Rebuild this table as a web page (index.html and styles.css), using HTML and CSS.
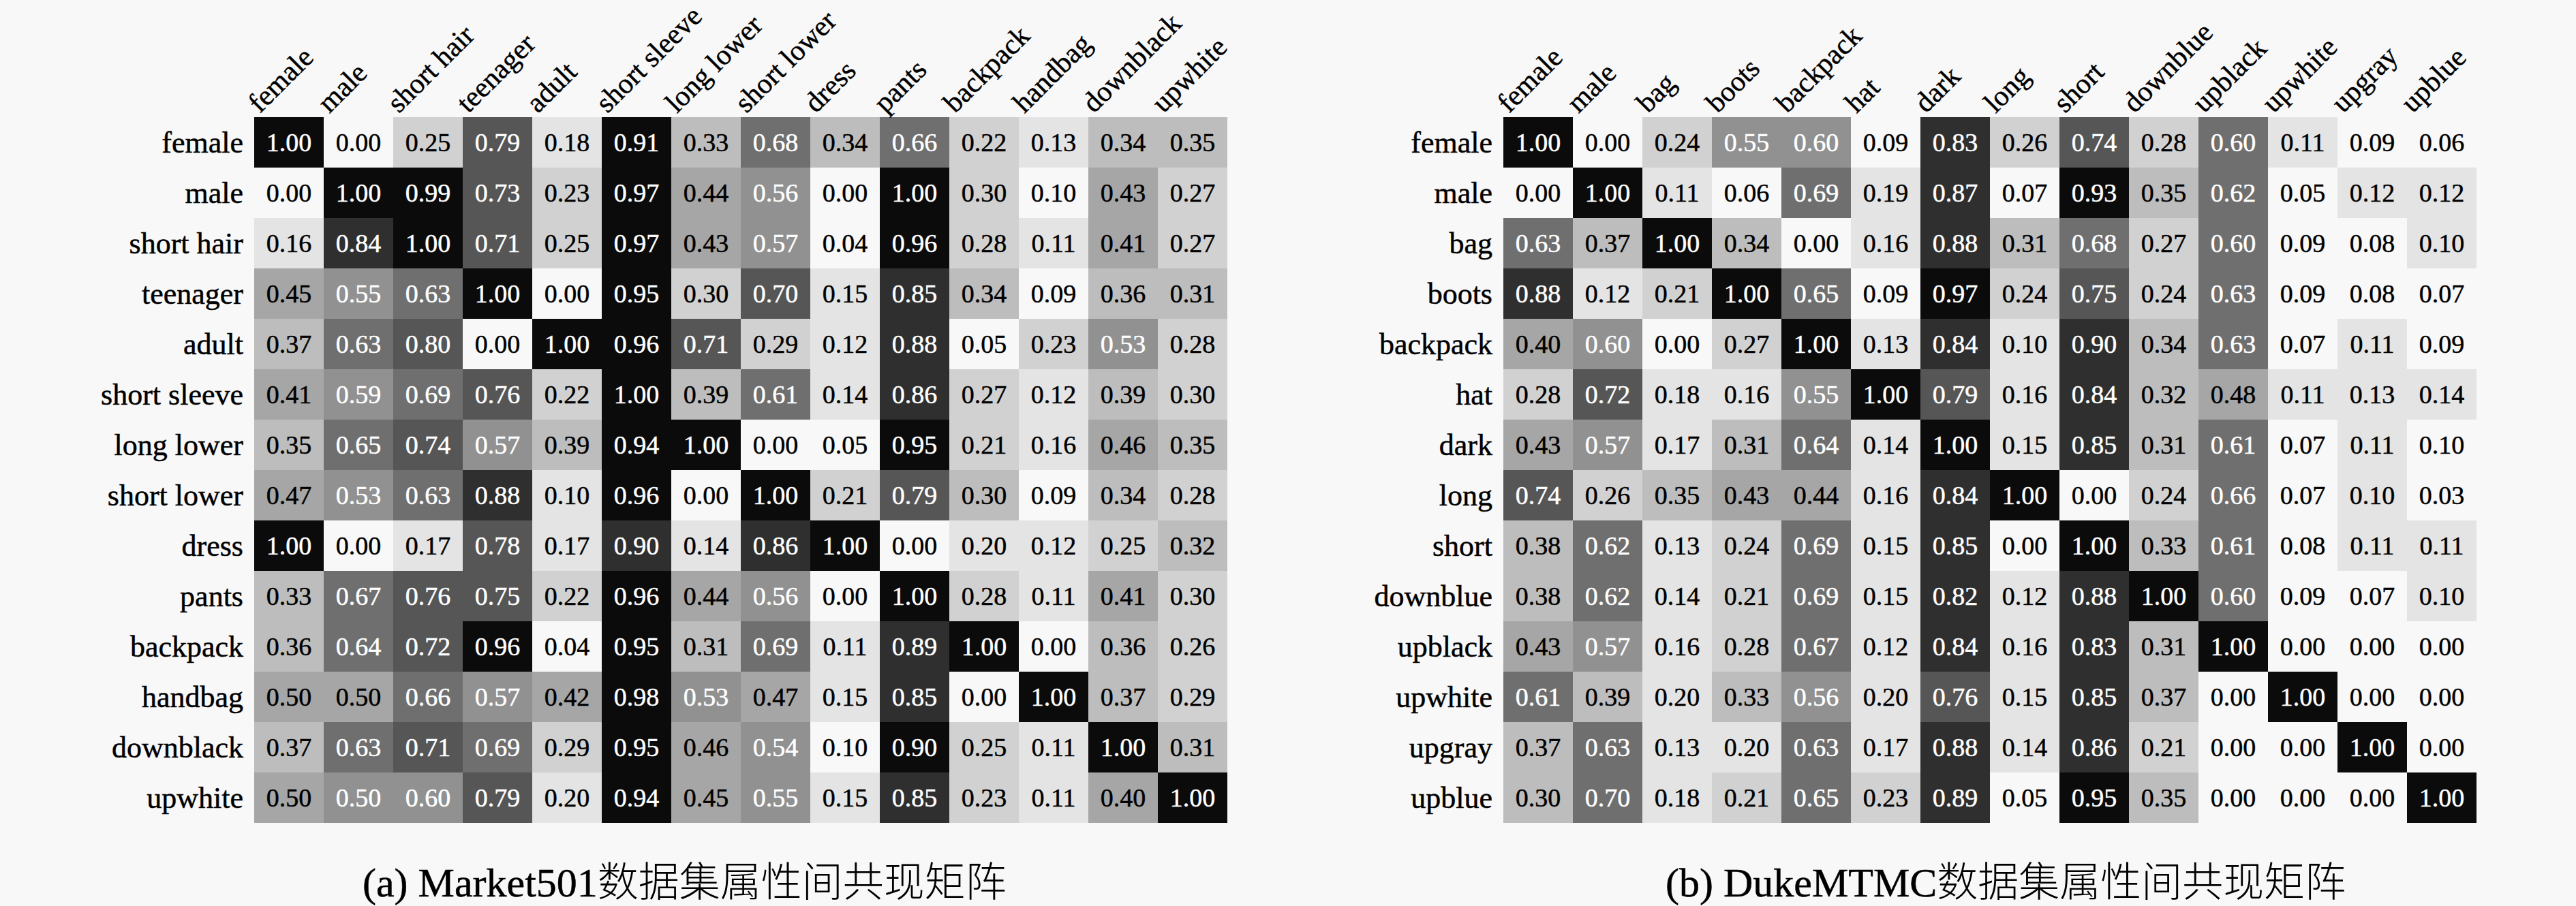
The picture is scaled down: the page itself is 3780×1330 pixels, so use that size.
FILE: index.html
```html
<!DOCTYPE html>
<html lang="zh-CN">
<head>
<meta charset="utf-8">
<title>属性间共现矩阵</title>
<link rel="stylesheet" href="styles.css">
</head>
<body>
<main class="page">
  <figure class="panel">
    <div class="matrix">
      <div class="corner"></div>
      <div class="ch"><span>female</span></div>
      <div class="ch"><span>male</span></div>
      <div class="ch"><span>short hair</span></div>
      <div class="ch"><span>teenager</span></div>
      <div class="ch"><span>adult</span></div>
      <div class="ch"><span>short sleeve</span></div>
      <div class="ch"><span>long lower</span></div>
      <div class="ch"><span>short lower</span></div>
      <div class="ch"><span>dress</span></div>
      <div class="ch"><span>pants</span></div>
      <div class="ch"><span>backpack</span></div>
      <div class="ch"><span>handbag</span></div>
      <div class="ch"><span>downblack</span></div>
      <div class="ch"><span>upwhite</span></div>

      <div class="rl">female</div>
      <div class="c b9">1.00</div><div class="c b0">0.00</div><div class="c b2">0.25</div><div class="c b7">0.79</div><div class="c b1">0.18</div><div class="c b9">0.91</div><div class="c b3">0.33</div><div class="c b6">0.68</div><div class="c b3">0.34</div><div class="c b6">0.66</div><div class="c b2">0.22</div><div class="c b1">0.13</div><div class="c b3">0.34</div><div class="c b3">0.35</div>

      <div class="rl">male</div>
      <div class="c b0">0.00</div><div class="c b9">1.00</div><div class="c b9">0.99</div><div class="c b7">0.73</div><div class="c b2">0.23</div><div class="c b9">0.97</div><div class="c b4">0.44</div><div class="c b5">0.56</div><div class="c b0">0.00</div><div class="c b9">1.00</div><div class="c b2">0.30</div><div class="c b0">0.10</div><div class="c b4">0.43</div><div class="c b2">0.27</div>

      <div class="rl">short hair</div>
      <div class="c b1">0.16</div><div class="c b8">0.84</div><div class="c b9">1.00</div><div class="c b7">0.71</div><div class="c b2">0.25</div><div class="c b9">0.97</div><div class="c b4">0.43</div><div class="c b5">0.57</div><div class="c b0">0.04</div><div class="c b9">0.96</div><div class="c b2">0.28</div><div class="c b1">0.11</div><div class="c b4">0.41</div><div class="c b2">0.27</div>

      <div class="rl">teenager</div>
      <div class="c b4">0.45</div><div class="c b5">0.55</div><div class="c b6">0.63</div><div class="c b9">1.00</div><div class="c b0">0.00</div><div class="c b9">0.95</div><div class="c b2">0.30</div><div class="c b7">0.70</div><div class="c b1">0.15</div><div class="c b8">0.85</div><div class="c b3">0.34</div><div class="c b0">0.09</div><div class="c b3">0.36</div><div class="c b3">0.31</div>

      <div class="rl">adult</div>
      <div class="c b3">0.37</div><div class="c b6">0.63</div><div class="c b7">0.80</div><div class="c b0">0.00</div><div class="c b9">1.00</div><div class="c b9">0.96</div><div class="c b7">0.71</div><div class="c b2">0.29</div><div class="c b1">0.12</div><div class="c b8">0.88</div><div class="c b0">0.05</div><div class="c b2">0.23</div><div class="c b5">0.53</div><div class="c b2">0.28</div>

      <div class="rl">short sleeve</div>
      <div class="c b4">0.41</div><div class="c b5">0.59</div><div class="c b6">0.69</div><div class="c b7">0.76</div><div class="c b2">0.22</div><div class="c b9">1.00</div><div class="c b3">0.39</div><div class="c b6">0.61</div><div class="c b1">0.14</div><div class="c b8">0.86</div><div class="c b2">0.27</div><div class="c b1">0.12</div><div class="c b3">0.39</div><div class="c b2">0.30</div>

      <div class="rl">long lower</div>
      <div class="c b3">0.35</div><div class="c b6">0.65</div><div class="c b7">0.74</div><div class="c b5">0.57</div><div class="c b3">0.39</div><div class="c b9">0.94</div><div class="c b9">1.00</div><div class="c b0">0.00</div><div class="c b0">0.05</div><div class="c b9">0.95</div><div class="c b2">0.21</div><div class="c b1">0.16</div><div class="c b4">0.46</div><div class="c b3">0.35</div>

      <div class="rl">short lower</div>
      <div class="c b4">0.47</div><div class="c b5">0.53</div><div class="c b6">0.63</div><div class="c b8">0.88</div><div class="c b1">0.10</div><div class="c b9">0.96</div><div class="c b0">0.00</div><div class="c b9">1.00</div><div class="c b2">0.21</div><div class="c b7">0.79</div><div class="c b3">0.30</div><div class="c b0">0.09</div><div class="c b3">0.34</div><div class="c b2">0.28</div>

      <div class="rl">dress</div>
      <div class="c b9">1.00</div><div class="c b0">0.00</div><div class="c b1">0.17</div><div class="c b7">0.78</div><div class="c b1">0.17</div><div class="c b8">0.90</div><div class="c b1">0.14</div><div class="c b8">0.86</div><div class="c b9">1.00</div><div class="c b0">0.00</div><div class="c b1">0.20</div><div class="c b1">0.12</div><div class="c b2">0.25</div><div class="c b3">0.32</div>

      <div class="rl">pants</div>
      <div class="c b3">0.33</div><div class="c b6">0.67</div><div class="c b7">0.76</div><div class="c b7">0.75</div><div class="c b2">0.22</div><div class="c b9">0.96</div><div class="c b4">0.44</div><div class="c b5">0.56</div><div class="c b0">0.00</div><div class="c b9">1.00</div><div class="c b2">0.28</div><div class="c b1">0.11</div><div class="c b4">0.41</div><div class="c b2">0.30</div>

      <div class="rl">backpack</div>
      <div class="c b3">0.36</div><div class="c b6">0.64</div><div class="c b7">0.72</div><div class="c b9">0.96</div><div class="c b0">0.04</div><div class="c b9">0.95</div><div class="c b3">0.31</div><div class="c b6">0.69</div><div class="c b1">0.11</div><div class="c b8">0.89</div><div class="c b9">1.00</div><div class="c b0">0.00</div><div class="c b3">0.36</div><div class="c b2">0.26</div>

      <div class="rl">handbag</div>
      <div class="c b4">0.50</div><div class="c b4">0.50</div><div class="c b6">0.66</div><div class="c b5">0.57</div><div class="c b4">0.42</div><div class="c b9">0.98</div><div class="c b5">0.53</div><div class="c b4">0.47</div><div class="c b1">0.15</div><div class="c b8">0.85</div><div class="c b0">0.00</div><div class="c b9">1.00</div><div class="c b3">0.37</div><div class="c b2">0.29</div>

      <div class="rl">downblack</div>
      <div class="c b3">0.37</div><div class="c b6">0.63</div><div class="c b7">0.71</div><div class="c b6">0.69</div><div class="c b2">0.29</div><div class="c b9">0.95</div><div class="c b4">0.46</div><div class="c b5">0.54</div><div class="c b0">0.10</div><div class="c b9">0.90</div><div class="c b2">0.25</div><div class="c b1">0.11</div><div class="c b9">1.00</div><div class="c b3">0.31</div>

      <div class="rl">upwhite</div>
      <div class="c b4">0.50</div><div class="c b5">0.50</div><div class="c b5">0.60</div><div class="c b7">0.79</div><div class="c b1">0.20</div><div class="c b9">0.94</div><div class="c b4">0.45</div><div class="c b5">0.55</div><div class="c b1">0.15</div><div class="c b8">0.85</div><div class="c b2">0.23</div><div class="c b1">0.11</div><div class="c b4">0.40</div><div class="c b9">1.00</div>
    </div>
    <figcaption class="caption cap-a">(a) Market501<span class="cjk">数据集属性间共现矩阵</span></figcaption>
  </figure>

  <figure class="panel">
    <div class="matrix">
      <div class="corner"></div>
      <div class="ch"><span>female</span></div>
      <div class="ch"><span>male</span></div>
      <div class="ch"><span>bag</span></div>
      <div class="ch"><span>boots</span></div>
      <div class="ch"><span>backpack</span></div>
      <div class="ch"><span>hat</span></div>
      <div class="ch"><span>dark</span></div>
      <div class="ch"><span>long</span></div>
      <div class="ch"><span>short</span></div>
      <div class="ch"><span>downblue</span></div>
      <div class="ch"><span>upblack</span></div>
      <div class="ch"><span>upwhite</span></div>
      <div class="ch"><span>upgray</span></div>
      <div class="ch"><span>upblue</span></div>

      <div class="rl">female</div>
      <div class="c b9">1.00</div><div class="c b0">0.00</div><div class="c b2">0.24</div><div class="c b5">0.55</div><div class="c b5">0.60</div><div class="c b0">0.09</div><div class="c b8">0.83</div><div class="c b2">0.26</div><div class="c b7">0.74</div><div class="c b2">0.28</div><div class="c b6">0.60</div><div class="c b1">0.11</div><div class="c b0">0.09</div><div class="c b0">0.06</div>

      <div class="rl">male</div>
      <div class="c b0">0.00</div><div class="c b9">1.00</div><div class="c b1">0.11</div><div class="c b0">0.06</div><div class="c b6">0.69</div><div class="c b1">0.19</div><div class="c b8">0.87</div><div class="c b0">0.07</div><div class="c b9">0.93</div><div class="c b3">0.35</div><div class="c b6">0.62</div><div class="c b0">0.05</div><div class="c b1">0.12</div><div class="c b1">0.12</div>

      <div class="rl">bag</div>
      <div class="c b6">0.63</div><div class="c b3">0.37</div><div class="c b9">1.00</div><div class="c b3">0.34</div><div class="c b0">0.00</div><div class="c b1">0.16</div><div class="c b8">0.88</div><div class="c b3">0.31</div><div class="c b6">0.68</div><div class="c b2">0.27</div><div class="c b6">0.60</div><div class="c b0">0.09</div><div class="c b0">0.08</div><div class="c b1">0.10</div>

      <div class="rl">boots</div>
      <div class="c b8">0.88</div><div class="c b1">0.12</div><div class="c b2">0.21</div><div class="c b9">1.00</div><div class="c b6">0.65</div><div class="c b0">0.09</div><div class="c b9">0.97</div><div class="c b2">0.24</div><div class="c b7">0.75</div><div class="c b2">0.24</div><div class="c b6">0.63</div><div class="c b0">0.09</div><div class="c b0">0.08</div><div class="c b0">0.07</div>

      <div class="rl">backpack</div>
      <div class="c b4">0.40</div><div class="c b5">0.60</div><div class="c b0">0.00</div><div class="c b2">0.27</div><div class="c b9">1.00</div><div class="c b1">0.13</div><div class="c b8">0.84</div><div class="c b1">0.10</div><div class="c b8">0.90</div><div class="c b3">0.34</div><div class="c b6">0.63</div><div class="c b0">0.07</div><div class="c b1">0.11</div><div class="c b0">0.09</div>

      <div class="rl">hat</div>
      <div class="c b2">0.28</div><div class="c b7">0.72</div><div class="c b1">0.18</div><div class="c b1">0.16</div><div class="c b5">0.55</div><div class="c b9">1.00</div><div class="c b7">0.79</div><div class="c b1">0.16</div><div class="c b8">0.84</div><div class="c b3">0.32</div><div class="c b4">0.48</div><div class="c b1">0.11</div><div class="c b1">0.13</div><div class="c b1">0.14</div>

      <div class="rl">dark</div>
      <div class="c b4">0.43</div><div class="c b5">0.57</div><div class="c b1">0.17</div><div class="c b3">0.31</div><div class="c b6">0.64</div><div class="c b1">0.14</div><div class="c b9">1.00</div><div class="c b1">0.15</div><div class="c b8">0.85</div><div class="c b3">0.31</div><div class="c b6">0.61</div><div class="c b0">0.07</div><div class="c b1">0.11</div><div class="c b0">0.10</div>

      <div class="rl">long</div>
      <div class="c b7">0.74</div><div class="c b2">0.26</div><div class="c b3">0.35</div><div class="c b4">0.43</div><div class="c b4">0.44</div><div class="c b1">0.16</div><div class="c b8">0.84</div><div class="c b9">1.00</div><div class="c b0">0.00</div><div class="c b2">0.24</div><div class="c b6">0.66</div><div class="c b0">0.07</div><div class="c b1">0.10</div><div class="c b0">0.03</div>

      <div class="rl">short</div>
      <div class="c b3">0.38</div><div class="c b6">0.62</div><div class="c b1">0.13</div><div class="c b2">0.24</div><div class="c b6">0.69</div><div class="c b1">0.15</div><div class="c b8">0.85</div><div class="c b0">0.00</div><div class="c b9">1.00</div><div class="c b3">0.33</div><div class="c b6">0.61</div><div class="c b0">0.08</div><div class="c b1">0.11</div><div class="c b1">0.11</div>

      <div class="rl">downblue</div>
      <div class="c b3">0.38</div><div class="c b6">0.62</div><div class="c b1">0.14</div><div class="c b2">0.21</div><div class="c b6">0.69</div><div class="c b1">0.15</div><div class="c b8">0.82</div><div class="c b1">0.12</div><div class="c b8">0.88</div><div class="c b9">1.00</div><div class="c b6">0.60</div><div class="c b0">0.09</div><div class="c b0">0.07</div><div class="c b1">0.10</div>

      <div class="rl">upblack</div>
      <div class="c b4">0.43</div><div class="c b5">0.57</div><div class="c b1">0.16</div><div class="c b2">0.28</div><div class="c b6">0.67</div><div class="c b1">0.12</div><div class="c b8">0.84</div><div class="c b1">0.16</div><div class="c b8">0.83</div><div class="c b3">0.31</div><div class="c b9">1.00</div><div class="c b0">0.00</div><div class="c b0">0.00</div><div class="c b0">0.00</div>

      <div class="rl">upwhite</div>
      <div class="c b6">0.61</div><div class="c b3">0.39</div><div class="c b1">0.20</div><div class="c b3">0.33</div><div class="c b5">0.56</div><div class="c b1">0.20</div><div class="c b7">0.76</div><div class="c b1">0.15</div><div class="c b8">0.85</div><div class="c b3">0.37</div><div class="c b0">0.00</div><div class="c b9">1.00</div><div class="c b0">0.00</div><div class="c b0">0.00</div>

      <div class="rl">upgray</div>
      <div class="c b3">0.37</div><div class="c b6">0.63</div><div class="c b1">0.13</div><div class="c b1">0.20</div><div class="c b6">0.63</div><div class="c b1">0.17</div><div class="c b8">0.88</div><div class="c b1">0.14</div><div class="c b8">0.86</div><div class="c b2">0.21</div><div class="c b0">0.00</div><div class="c b0">0.00</div><div class="c b9">1.00</div><div class="c b0">0.00</div>

      <div class="rl">upblue</div>
      <div class="c b3">0.30</div><div class="c b6">0.70</div><div class="c b1">0.18</div><div class="c b2">0.21</div><div class="c b6">0.65</div><div class="c b2">0.23</div><div class="c b8">0.89</div><div class="c b0">0.05</div><div class="c b9">0.95</div><div class="c b3">0.35</div><div class="c b0">0.00</div><div class="c b0">0.00</div><div class="c b0">0.00</div><div class="c b9">1.00</div>
    </div>
    <figcaption class="caption cap-b">(b) DukeMTMC<span class="cjk">数据集属性间共现矩阵</span></figcaption>
  </figure>
</main>
</body>
</html>
```

FILE: styles.css
```css
html, body {
  margin: 0;
  padding: 0;
}

body {
  width: 3780px;
  height: 1330px;
  overflow: hidden;
  background: #f8f8f8;
  color: #000;
  font-family: "Liberation Serif", "Times New Roman", serif;
  -webkit-text-stroke: 0.5px currentColor;
}

.page {
  display: flex;
  gap: 65px;
  padding-left: 33px;
}

.panel {
  margin: 0;
  display: flex;
  flex-direction: column;
}

.matrix {
  display: grid;
  grid-template-columns: 340px repeat(14, 102px);
  grid-template-rows: 172px repeat(14, 74px);
}

.ch {
  display: flex;
  align-items: flex-end;
}

.ch span {
  flex-shrink: 0;
  font-size: 42px;
  line-height: 22px;
  white-space: nowrap;
  margin: 0 0 8px 9px;
  transform-origin: 0 26px;
  transform: rotate(-45deg);
}

.rl {
  display: flex;
  align-items: center;
  justify-content: flex-end;
  padding-right: 16px;
  font-size: 44px;
  white-space: nowrap;
}

.c {
  display: flex;
  align-items: center;
  justify-content: center;
  font-size: 38px;
}

.b0 { background: #f8f8f8; }
.b1 { background: #e4e4e4; }
.b2 { background: #d1d1d1; }
.b3 { background: #bdbdbd; }
.b4 { background: #a6a6a6; }
.b5 { background: #919191; color: #fff; }
.b6 { background: #6f6f6f; color: #fff; }
.b7 { background: #565656; color: #fff; }
.b8 { background: #2f2f2f; color: #fff; }
.b9 { background: #0b0b0b; color: #fff; }

.caption {
  margin-top: 52px;
  font-size: 60px;
  line-height: 60px;
  white-space: nowrap;
}

.cap-a { padding-left: 499px; }
.cap-b { padding-left: 578px; }

.cjk {
  font-family: "Noto Sans CJK SC", sans-serif;
  font-weight: 300;
  -webkit-text-stroke: 0;
}
```
